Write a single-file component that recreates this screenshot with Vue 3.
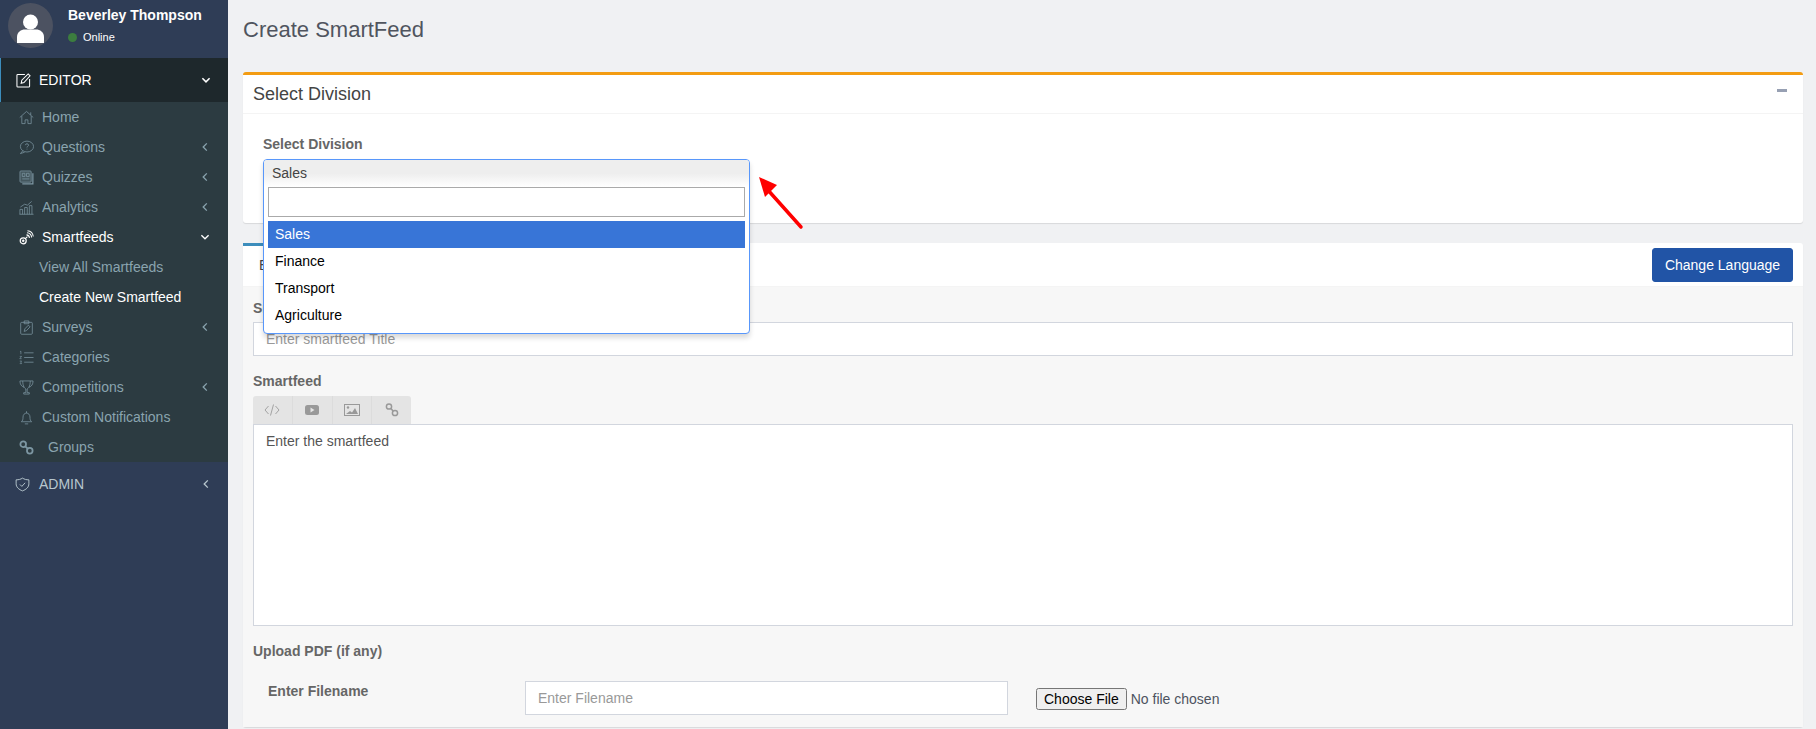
<script setup>
const items = [
  { label: 'Home', icon: 'home' },
  { label: 'Questions', icon: 'question', caret: 'left' },
  { label: 'Quizzes', icon: 'quiz', caret: 'left' },
  { label: 'Analytics', icon: 'chart', caret: 'left' },
  { label: 'Smartfeeds', icon: 'feed', caret: 'down', open: true },
  { label: 'View All Smartfeeds', sub: true },
  { label: 'Create New Smartfeed', sub: true, active: true },
  { label: 'Surveys', icon: 'survey', caret: 'left' },
  { label: 'Categories', icon: 'list' },
  { label: 'Competitions', icon: 'trophy', caret: 'left' },
  { label: 'Custom Notifications', icon: 'bell' },
  { label: 'Groups', icon: 'link', wide: true }
]
const options = ['Sales', 'Finance', 'Transport', 'Agriculture']
</script>

<template>
  <div class="page">
    <aside class="sidebar">
      <div class="user">
        <div class="avatar">
          <svg viewBox="0 0 45 45" width="45" height="45">
            <circle cx="22.500" cy="22.500" r="22.500" fill="#4c5261" />
            <ellipse cx="22.500" cy="19" rx="7.500" ry="7.500" fill="#fff" />
            <path d="M9 40v-6c0-5 4-7.500 8-7.500h11c4 0 8 2.500 8 7.500v6z" fill="#fff" />
          </svg>
        </div>
        <div class="user-info">
          <div class="user-name">Beverley Thompson</div>
          <div class="user-status"><span class="dot"></span>Online</div>
        </div>
      </div>

      <div class="group-head open">
        <svg class="g-icon" viewBox="0 0 16 16" fill="none" stroke="#fff" stroke-width="1.100">
          <path d="M9.500 1.500H2a1 1 0 0 0-1 1v11.500a1 1 0 0 0 1 1h11.500a1 1 0 0 0 1-1V6.500" />
          <path d="M5.500 11l.7-3.300L13 1l2 2-6.500 7.200z" />
        </svg>
        <span class="g-label">EDITOR</span>
        <svg class="caret" viewBox="0 0 10 10" fill="none" stroke="#fff" stroke-width="1.300"><path d="M2 3.500l3 3 3-3" /></svg>
      </div>

      <ul class="menu">
        <li
          v-for="item in items"
          :key="item.label"
          class="menu-item"
          :class="{ sub: item.sub, active: item.active, open: item.open, wide: item.wide }"
        >
          <svg v-if="item.icon" class="m-icon" viewBox="0 0 16 16" fill="none" stroke="currentColor" stroke-width="0.800">
            <template v-if="item.icon === 'home'">
              <path d="M.8 8L8 1.500 15.200 8M12.500 5.500V2.500M3 6.500V14.500h3.500V10.500h3V14.500H13V6.500" />
            </template>
            <template v-else-if="item.icon === 'question'">
              <ellipse cx="8.500" cy="7" rx="7" ry="5.800" />
              <path d="M4 11.500L1.500 14.500l4.500-1.500M6.800 5.500c0-2 3.400-2 3.400 0 0 1.200-1.700 1.200-1.700 2.500M8.500 9.300v.8" />
            </template>
            <template v-else-if="item.icon === 'quiz'">
              <rect x="1" y="1" width="12" height="12" rx="1" fill="currentColor" fill-opacity=".3" />
              <path d="M14.800 3.500v11.300H3.500" stroke-width="1.300" />
              <path d="M3.500 3.500h2.800v3.500H3.500zM8 3.500h2.800v3.500H8zM3.500 9.500h7.500" />
            </template>
            <template v-else-if="item.icon === 'chart'">
              <path d="M1 15.200V10h2.800v5.200M6 15.200V8h2.800v7.200M11 15.200V6h2.800v9.200M.5 15.200h15M1.500 7.500l4.500-3 3 1L13.500 1.500" />
            </template>
            <template v-else-if="item.icon === 'feed'">
              <circle cx="4.500" cy="11.500" r="3.200" stroke-width="1.300" />
              <circle cx="4.500" cy="11.500" r="1" fill="currentColor" />
              <path d="M6.500 9.500L9 7M8 5.200c2 .2 3 1.200 3.200 3.200M8.500 3c3 .2 4.700 2 5 5M9 .8c3.600.2 5.800 2.500 6.200 6.200" stroke-width="1.100" />
            </template>
            <template v-else-if="item.icon === 'survey'">
              <rect x="1.800" y="2.500" width="12.400" height="12.700" rx="1" />
              <path d="M5.500 4V1h5v3zM5.500 12.200l.7-2.700 3.800-4 1.800 1.800-3.800 4z" />
            </template>
            <template v-else-if="item.icon === 'list'">
              <path d="M5.500 3h10M5.500 8h10M5.500 13h10" />
              <path d="M1 1.800l1-.5V4.500M.8 6.800h2l-2 2.500h2M.8 11.800h2l-1 1 1 1.700h-2" stroke-width=".7" />
            </template>
            <template v-else-if="item.icon === 'trophy'">
              <path d="M1 1h14c0 3.500-1.500 5.800-4.500 6.800-.6 1-1.500 1.500-1.800 1.800v3.900H11v1.500H5v-1.500h2.300V9.600C7 9.300 6 8.800 5.500 7.800 2.500 6.800 1 4.500 1 1z" />
              <path d="M4 1c0 3 .5 5 1.500 6.800M12 1c0 3-.5 5-1.500 6.800" />
            </template>
            <template v-else-if="item.icon === 'bell'">
              <path d="M2.500 12.500c1.500-1 1.800-2.500 1.800-5C4.300 5 6 3.300 8 3.300s3.700 1.700 3.700 4.200c0 2.500.3 4 1.800 5zM8 1.300v2M6.200 14.800h3.600" />
            </template>
            <template v-else-if="item.icon === 'link'">
              <circle cx="4.500" cy="4.500" r="3" stroke-width="1.900" />
              <circle cx="11.500" cy="11.500" r="3" stroke-width="1.900" />
              <path d="M7 7l2 2" stroke-width="1.900" />
            </template>
          </svg>
          <span class="m-label">{{ item.label }}</span>
          <svg v-if="item.caret" class="caret" viewBox="0 0 10 10" fill="none" :stroke="item.open ? '#fff' : '#8aa4af'" stroke-width="1.100">
            <path v-if="item.caret === 'left'" d="M6.500 2l-3 3 3 3" />
            <path v-else d="M2 3.500l3 3 3-3" />
          </svg>
        </li>
      </ul>

      <div class="group-head admin">
        <svg class="g-icon" viewBox="0 0 16 16" fill="none" stroke="#b8c7ce" stroke-width="1">
          <path d="M8 1.200c2 1.300 4 1.800 6.800 1.800v4.300c0 3.500-2.800 6-6.800 7.500-4-1.500-6.800-4-6.800-7.500V3C4 3 6 2.500 8 1.200z" />
          <path d="M5.300 8l2 2 3.500-3.800" />
        </svg>
        <span class="g-label">ADMIN</span>
        <svg class="caret" viewBox="0 0 10 10" fill="none" stroke="#b8c7ce" stroke-width="1.100"><path d="M6.500 2l-3 3 3 3" /></svg>
      </div>
    </aside>

    <main class="content">
      <h1 class="title">Create SmartFeed</h1>

      <section class="box warn">
        <header class="box-head">
          <h3>Select Division</h3>
          <span class="minus"></span>
        </header>
        <div class="box-body">
          <label class="lbl">Select Division</label>
          <div class="select-wrap">
            <div class="dropdown">
              <div class="dd-current">Sales</div>
              <div class="dd-search"><input type="text" /></div>
              <ul class="dd-list">
                <li v-for="(o, i) in options" :key="o" :class="{ hi: i === 0 }">{{ o }}</li>
              </ul>
            </div>
            <svg class="arrow" width="50" height="60" viewBox="0 0 50 60">
              <path d="M46 54L12 16" stroke="#f00" stroke-width="3.500" stroke-linecap="round" fill="none" />
              <path d="M4 4l18 8-12 12z" fill="#f00" />
            </svg>
          </div>
        </div>
      </section>

      <section class="box form">
        <header class="tabs">
          <span class="tab">English</span>
          <button class="lang" type="button">Change Language</button>
        </header>
        <div class="form-body">
          <label class="lbl">Smartfeed Title</label>
          <input class="field" type="text" placeholder="Enter smartfeed Title" />

          <label class="lbl feed-lbl">Smartfeed</label>
          <div class="toolbar">
            <span class="tool">
              <svg width="16" height="16" viewBox="0 0 16 16" fill="none" stroke="#a3a3a3" stroke-width="1"><path d="M4.500 4L1 8l3.500 4M11.500 4L15 8l-3.500 4M9.500 2.500l-3 11" /></svg>
            </span>
            <span class="tool">
              <svg width="16" height="16" viewBox="0 0 16 16"><rect x="1" y="3" width="14" height="10" rx="2.500" fill="#999" /><path d="M6.500 5.500l4 2.500-4 2.500z" fill="#e4e4e4" /></svg>
            </span>
            <span class="tool">
              <svg width="16" height="16" viewBox="0 0 16 16"><rect x=".5" y="2.500" width="15" height="11" fill="none" stroke="#999" /><circle cx="4" cy="5.500" r="1.200" fill="#999" /><path d="M2 12l4-3 2 1.500L11 6l3 6z" fill="#999" /></svg>
            </span>
            <span class="tool">
              <svg width="16" height="16" viewBox="0 0 16 16" fill="none" stroke="#999" stroke-width="1.500"><circle cx="5" cy="4.500" r="2.600" /><circle cx="11" cy="11" r="2.600" /><path d="M7 6.500l2 2.500" /></svg>
            </span>
          </div>
          <div class="editor">Enter the smartfeed</div>

          <label class="lbl upload-lbl">Upload PDF (if any)</label>
          <div class="file-row">
            <label class="lbl file-lbl">Enter Filename</label>
            <input class="field file-name" type="text" placeholder="Enter Filename" />
            <input class="file" type="file" />
          </div>
        </div>
      </section>
    </main>
  </div>
</template>

<style scoped>
* { box-sizing: border-box; }
.page {
  display: flex;
  width: 1816px;
  height: 729px;
  overflow: hidden;
  background: #f0f1f3;
  font-family: "Liberation Sans", Arial, sans-serif;
  font-size: 14px;
  color: #4d5360;
}
.sidebar {
  flex: 0 0 228px;
  background: #2f3d56;
  display: flex;
  flex-direction: column;
}
.user {
  height: 58px;
  display: flex;
  padding: 3px 0 0 8px;
}
.avatar { width: 45px; height: 45px; }
.user-info { margin-left: 15px; }
.user-name { font-weight: 700; color: #fff; font-size: 14px; line-height: 16px; margin-top: 4px; }
.user-status { display: flex; align-items: center; font-size: 11px; color: #fff; margin-top: 8px; line-height: 12px; }
.dot { width: 9px; height: 9px; border-radius: 50%; background: #3c7d3f; margin-right: 6px; }
.group-head {
  display: flex;
  align-items: center;
  height: 44px;
  padding-left: 15px;
  padding-right: 16px;
}
.group-head.open { background: #1e282c; border-left: 1px solid #3c8dbc; color: #fff; padding-left: 15px; }
.group-head.admin { color: #b8c7ce; padding-left: 15px; }
.g-icon { width: 15px; height: 15px; margin-right: 8px; flex: none; }
.group-head.admin .g-icon { margin-right: 9px; }
.g-label { flex: 1; }
.caret { width: 12px; height: 12px; flex: none; }
.menu {
  list-style: none;
  margin: 0;
  padding: 0;
  background: #2c3b41;
}
.menu-item {
  height: 30px;
  display: flex;
  align-items: center;
  padding: 0 17px 0 19px;
  color: #8aa4af;
}
.menu-item.open { color: #fff; }
.menu-item.sub { padding-left: 39px; }
.menu-item.active { color: #fff; }
.m-icon { width: 15px; height: 15px; margin-right: 8px; flex: none; color: #7d97a3; }
.menu-item.open .m-icon { color: #fff; }
.menu-item.wide .m-icon { margin-right: 14px; }
.m-label { flex: 1; }

.content {
  flex: 1;
  min-width: 0;
  padding: 0 13px 0 15px;
}
.title {
  margin: 0;
  height: 72px;
  padding-top: 17px;
  font-size: 22px;
  line-height: 25px;
  font-weight: 400;
  color: #50555f;
}
.box {
  background: #fff;
  border-radius: 3px;
  box-shadow: 0 1px 1px rgba(0, 0, 0, .1);
}
.box.warn { border-top: 3px solid #f39c12; height: 151px; margin-bottom: 20px; }
.box-head {
  height: 39px;
  display: flex;
  align-items: center;
  justify-content: space-between;
  padding: 0 16px 0 10px;
  border-bottom: 1px solid #f4f4f4;
}
.box-head h3 { margin: 0; font-size: 18px; font-weight: 400; color: #444; }
.minus { width: 10px; height: 3px; background: #97a0b3; margin-bottom: 8px; }
.box-body { padding: 22px 20px 0; }
.lbl { display: block; font-weight: 700; color: #666; font-size: 14px; line-height: 16px; }
.select-wrap { position: relative; margin-top: 7px; height: 30px; }
.dropdown {
  position: absolute;
  z-index: 5;
  left: 0;
  top: 0;
  width: 487px;
  height: 175px;
  background: #fff;
  border: 1px solid #5897fb;
  border-radius: 4px;
  box-shadow: 0 4px 5px rgba(0, 0, 0, .15);
}
.dd-current {
  height: 27px;
  padding: 4px 8px;
  line-height: 18px;
  color: #444;
  background: linear-gradient(to bottom, #eee 50%, #fff 100%);
  border-radius: 3px 3px 0 0;
}
.dd-search { padding: 0 4px; height: 34px; }
.dd-search input {
  display: block;
  width: 100%;
  height: 30px;
  border: 1px solid #aaa;
  outline: 0;
  background: #fff;
}
.dd-list { list-style: none; margin: 0; padding: 0 4px; }
.dd-list li { height: 27px; line-height: 27px; padding: 0 7px; color: #000; }
.dd-list li.hi { background: #3875d7; color: #fff; }
.arrow { position: absolute; left: 492px; top: 14px; z-index: 6; }

.box.form { height: 484px; position: relative; border-top: 3px solid transparent; }
.box.form::before {
  content: "";
  position: absolute;
  left: 0;
  top: -3px;
  width: 120px;
  height: 3px;
  background: #3c8dbc;
}
.tabs {
  height: 41px;
  display: flex;
  align-items: center;
  justify-content: space-between;
  padding: 0 10px 2px 16px;
  border-bottom: 1px solid #f4f4f4;
  color: #444;
}
.lang {
  height: 34px;
  width: 141px;
  background: #2154a6;
  border: 1px solid #2154a6;
  border-radius: 3px;
  color: #fff;
  font: 14px "Liberation Sans", Arial, sans-serif;
  padding: 0;
}
.form-body {
  background: #f7f7f7;
  height: 440px;
  padding: 13px 10px 0;
}
.field {
  display: block;
  width: 100%;
  height: 34px;
  border: 1px solid #d2d6de;
  background: #fff;
  padding: 0 12px;
  margin-top: 6px;
  font: 14px "Liberation Sans", Arial, sans-serif;
  color: #555;
  outline: 0;
}
.field::placeholder { color: #999; opacity: 1; }
.feed-lbl { margin-top: 17px; }
.toolbar {
  display: flex;
  width: 158px;
  height: 28px;
  margin-top: 7px;
  background: #e4e4e4;
  border-radius: 3px 3px 0 0;
}
.tool {
  flex: 1;
  display: flex;
  align-items: center;
  justify-content: center;
  border-right: 1px solid #dcdcdc;
}
.tool:last-child { border-right: 0; }
.editor {
  height: 202px;
  background: #fff;
  border: 1px solid #d2d6de;
  padding: 7px 12px;
  line-height: 18px;
  color: #555;
}
.upload-lbl { margin-top: 17px; }
.file-row { display: flex; align-items: flex-start; margin-top: 23px; padding-left: 15px; }
.file-lbl { width: 257px; margin-top: 1px; }
.file-name { width: 483px; margin-top: -1px; flex: none; }
.file { margin: 6px 0 0 28px; font: 14px "Liberation Sans", Arial, sans-serif; color: #4d5360; }
</style>

<style>
html, body { margin: 0; overflow: hidden; }
</style>
